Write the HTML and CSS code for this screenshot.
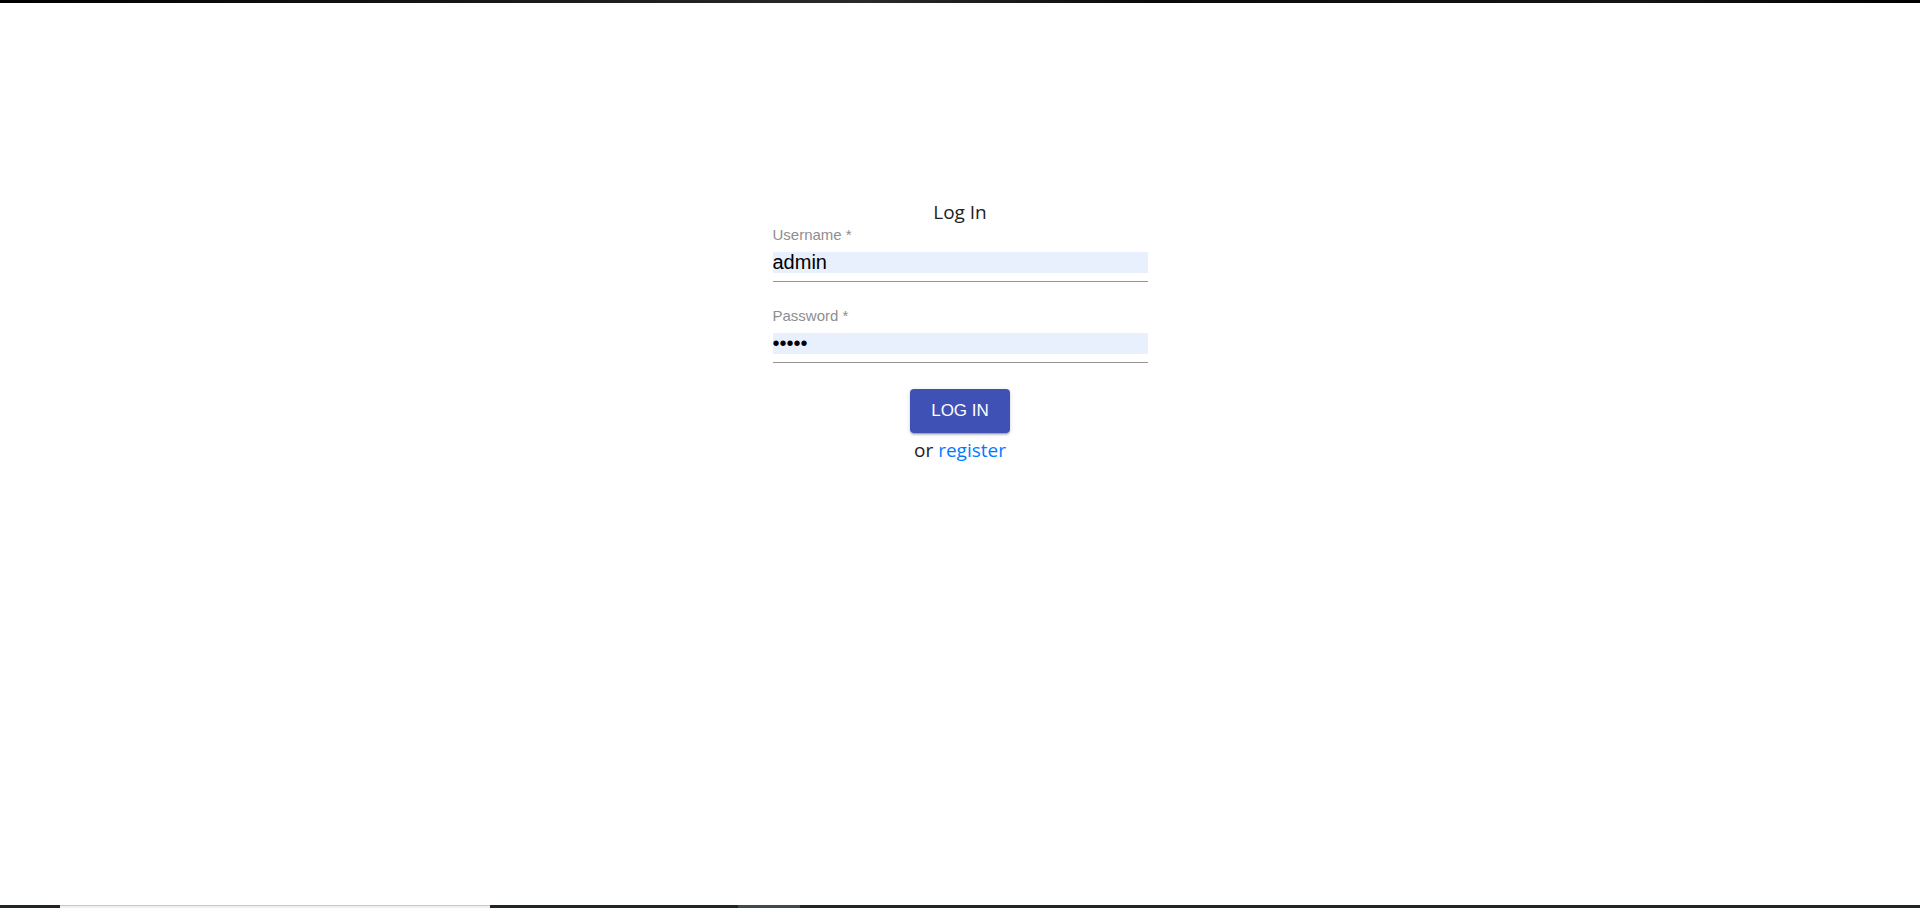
FILE: index.html
```html
<!DOCTYPE html>
<html lang="en">
  <head>
    <meta charset="UTF-8" />
    <meta name="viewport" content="width=device-width, initial-scale=1.0" />
    <title>Log In</title>
    <link rel="stylesheet" href="styles.css">
  </head>
  <body>
    <div class="top-bar"></div>

    <main class="page">
      <form class="login-form">
        <h2 class="title">Log In</h2>

        <label class="field-label" for="username">Username *</label>
        <div class="field">
          <input type="text" id="username" name="username" value="admin" required />
        </div>

        <label class="field-label second" for="password">Password *</label>
        <div class="field">
          <input type="password" id="password" name="password" value="admin" required />
        </div>

        <button type="button" class="btn">Log In</button>
        <p class="alt">or <a href="#">register</a></p>
      </form>
    </main>

    <div class="bottom-bar">
      <span class="seg-light"></span>
      <span class="seg-gray"></span>
    </div>
  </body>
</html>
```

FILE: styles.css
```css
* {
  box-sizing: border-box;
  margin: 0;
  padding: 0;
}

html,
body {
  height: 100%;
}

body {
  display: flex;
  flex-direction: column;
  background-color: #fff;
  font-family: "Open Sans", "Noto Sans", sans-serif;
  color: #212121;
}

.top-bar {
  height: 3px;
  background: linear-gradient(90deg, #000 0%, #1c1c1c 30%, #2a2a2a 45%, #0a0a0a 60%, #151515 85%, #000 100%);
}

.page {
  flex: 1;
  display: flex;
  justify-content: center;
  padding-top: 197px;
}

.login-form {
  width: 375px;
  display: flex;
  flex-direction: column;
}

.title {
  font-size: 19px;
  font-weight: normal;
  line-height: 24px;
  text-align: center;
  color: #222;
}

.field-label {
  margin-top: 2px;
  font-family: "Liberation Sans", Arial, sans-serif;
  font-size: 15px;
  line-height: 17px;
  color: #8e8e8e;
}

.field-label.second {
  margin-top: 25px;
}

.field {
  padding-top: 9px;
  padding-bottom: 8px;
  border-bottom: 1px solid #949494;
}

.field input {
  display: block;
  width: 100%;
  height: 21px;
  border: none;
  outline: none;
  background-color: #e8f0fe;
  font-family: "Liberation Sans", Arial, sans-serif;
  font-size: 20px;
  color: #000;
}

.btn {
  align-self: center;
  margin-top: 26px;
  width: 100px;
  height: 44px;
  background-color: #3f51b5;
  color: #fff;
  border: none;
  border-radius: 4px;
  font-family: "Liberation Sans", Arial, sans-serif;
  font-size: 17px;
  text-transform: uppercase;
  cursor: pointer;
  box-shadow: 0 3px 1px -2px rgba(0, 0, 0, 0.2), 0 2px 2px 0 rgba(0, 0, 0, 0.14), 0 1px 5px 0 rgba(0, 0, 0, 0.12);
}

.btn:hover {
  background-color: #303f9f;
}

.alt {
  margin-top: 3px;
  text-align: center;
  font-size: 19px;
  line-height: 28px;
  color: #212121;
}

.alt a {
  color: #007bff;
  text-decoration: none;
}

.bottom-bar {
  height: 3px;
  display: flex;
  background-color: #1c2629;
}

.seg-light {
  margin-left: 60px;
  width: 430px;
  background-color: #f0f0f0;
  border-top: 1px solid #c8c8c8;
}

.seg-gray {
  margin-left: 248px;
  width: 62px;
  background-color: #3f4a4f;
}
```
